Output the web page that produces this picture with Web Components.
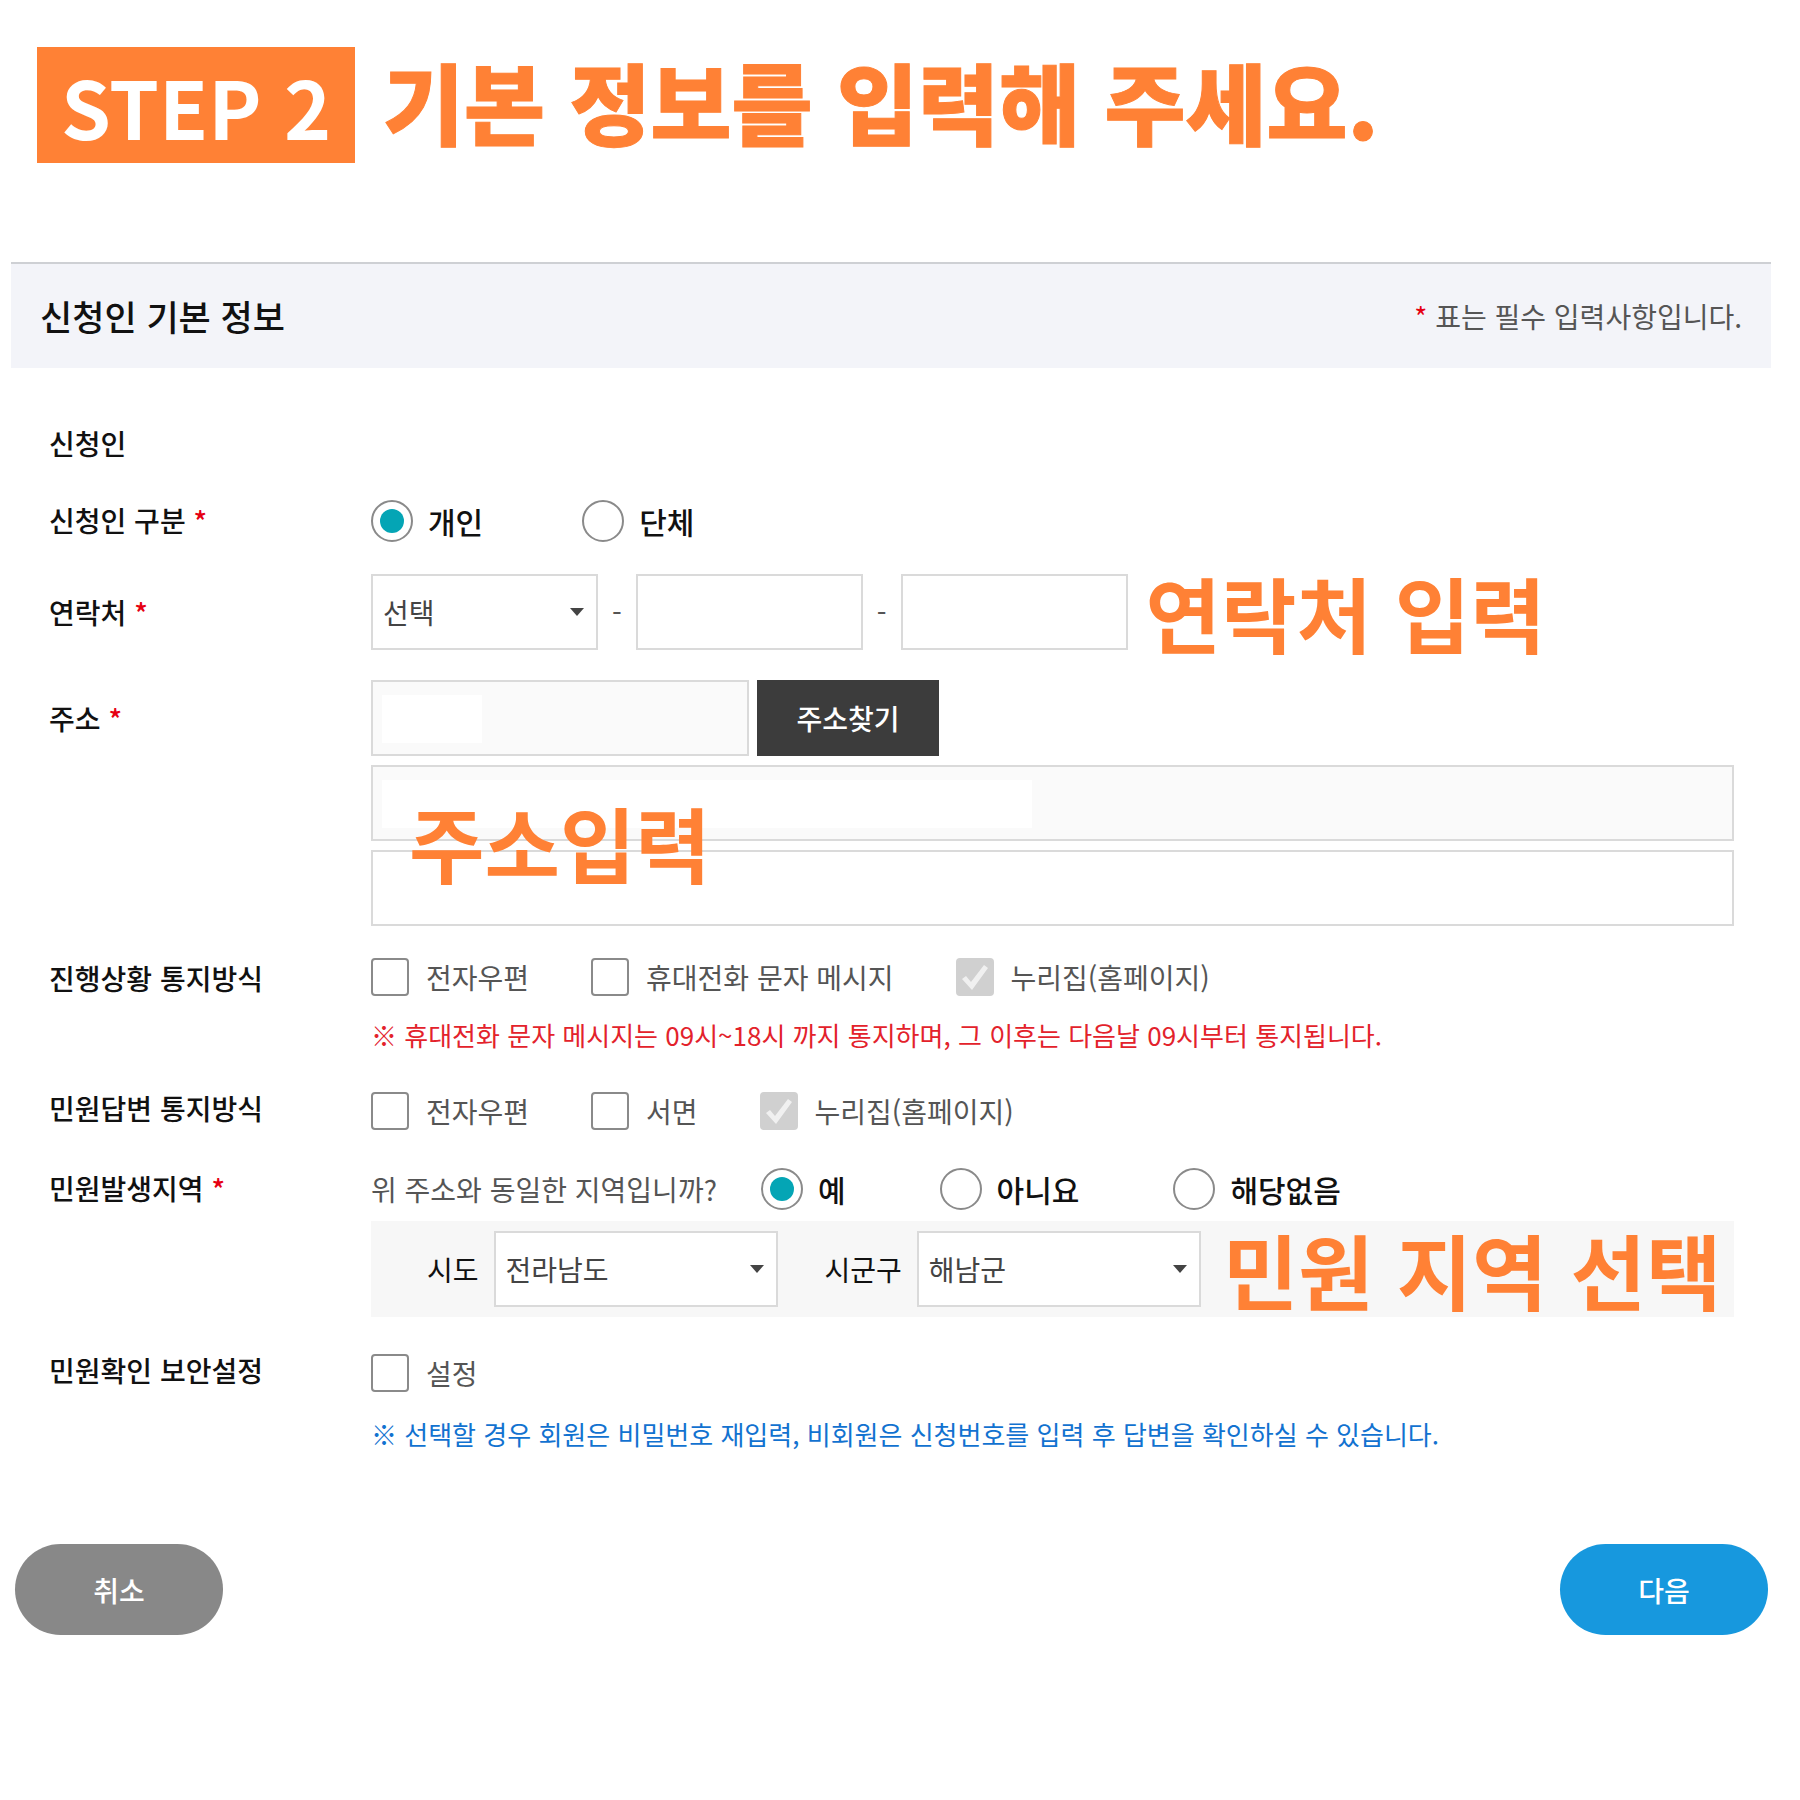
<!DOCTYPE html>
<html lang="ko">
<head>
<meta charset="utf-8">
<title>신청인 기본 정보</title>
<style>
  body {
    margin: 0;
    background: #fff;
    color: #111;
    font-family: "Noto Sans CJK KR", sans-serif;
    font-size: 28px;
    line-height: 40px;
    --accent: #ff8135;
    --line: #dadada;
  }
</style>
</head>
<body>
<apply-page></apply-page>

<script>
class StepTitle extends HTMLElement {
  constructor() {
    super();
    this.attachShadow({ mode: 'open' }).innerHTML = `
      <style>
        :host { display: block; padding: 47px 37px 99px; }
        h1 { display: flex; align-items: flex-start; gap: 28px; margin: 0; font-weight: 900; color: var(--accent); line-height: 116px; }
        .step { background: var(--accent); color: #fff; font-size: 80px; font-weight: 700; width: 318px; text-align: center; white-space: nowrap; }
        .text { font-size: 88px; line-height: 106px; -webkit-text-stroke: 1px var(--accent); white-space: nowrap; }
      </style>
      <h1><span class="step">${this.getAttribute('step')}</span><span class="text"><slot></slot></span></h1>`;
  }
}

class PanelHeader extends HTMLElement {
  constructor() {
    super();
    this.attachShadow({ mode: 'open' }).innerHTML = `
      <style>
        :host { display: flex; justify-content: space-between; align-items: center; height: 104px; padding: 0 29px; border-top: 2px solid #ced0d4; background: #f3f4f9; }
        h2 { margin: 0; font-size: 35px; font-weight: 500; }
        p { margin: 0; color: #555; }
        i { font-style: normal; color: #e60012; }
      </style>
      <h2><slot></slot></h2>
      <p><i>*</i> 표는 필수 입력사항입니다.</p>`;
  }
}

class FormRow extends HTMLElement {
  constructor() {
    super();
    const star = this.hasAttribute('required') ? ' <i>*</i>' : '';
    this.attachShadow({ mode: 'open' }).innerHTML = `
      <style>
        :host { display: grid; grid-template-columns: 322px minmax(0, 1fr); align-items: start; }
        .name { font-weight: 500; line-height: var(--lead, 40px); }
        i { font-style: normal; color: #e60012; }
        .field { padding-top: var(--drop, 0); }
      </style>
      <div class="name" id="name">${this.getAttribute('label')}${star}</div>
      <div class="field" role="group" aria-labelledby="name"><slot></slot></div>`;
  }
}

class ChoiceGroup extends HTMLElement {
  constructor() {
    super();
    const type = this.getAttribute('type');
    const name = this.getAttribute('name');
    const picked = Number(this.getAttribute('picked') || -1);
    const locked = this.hasAttribute('locked');
    const items = this.getAttribute('options').split('|').map((text, i) => `
      <span class="item">
        <span class="box">
          <input type="${type}" id="o${i}" name="${name}"${i === picked ? ' checked' : ''}${i === picked && locked ? ' disabled' : ''}>
          ${type === 'checkbox' ? '<svg viewBox="0 0 38 38" aria-hidden="true"><path d="M6 21 L10 18 L15 24 L28 7 L32 10 L16 32 Z"/></svg>' : ''}
        </span>
        <label for="o${i}">${text}</label>
      </span>`).join('');
    this.attachShadow({ mode: 'open' }).innerHTML = `
      <style>
        :host { display: flex; gap: 62px; color: #555; }
        :host([type="radio"]) { gap: var(--gap, 99px); color: #111; font-size: 30px; font-weight: 500; }
        .item { display: flex; align-items: center; gap: 17px; white-space: nowrap; }
        :host([type="radio"]) .item { gap: 15px; }
        .box { display: grid; }
        .box > * { grid-area: 1 / 1; }
        input { appearance: none; box-sizing: border-box; margin: 0; width: 38px; height: 38px; border: 2px solid #8a8a8a; border-radius: 4px; background: #fff; }
        input[type="radio"] { width: 42px; height: 42px; padding: 7px; border-radius: 50%; }
        input[type="radio"]:checked { background: #04a5b5 content-box; }
        input:disabled { border-color: #d0d0d0; background: #d0d0d0; }
        svg { width: 38px; height: 38px; fill: none; pointer-events: none; }
        input:checked + svg { fill: #f0f0f0; }
        label { line-height: 38px; }
      </style>${items}`;
  }
}

class TextField extends HTMLElement {
  constructor() {
    super();
    this.attachShadow({ mode: 'open' }).innerHTML = `
      <style>
        :host { display: block; }
        input { display: block; box-sizing: border-box; width: 100%; height: 76px; padding: 0 10px; border: 2px solid var(--line); border-radius: 0; background: #fff; font: inherit; color: #444; outline: 0; }
        input:read-only { background: linear-gradient(#fff, #fff) 9px 13px / var(--blank) 48px no-repeat #fafafa; }
      </style>
      <input type="text" aria-label="${this.getAttribute('label')}"${this.hasAttribute('readonly') ? ' readonly' : ''}>`;
  }
}

class SelectField extends HTMLElement {
  constructor() {
    super();
    const label = this.getAttribute('label');
    const shown = this.hasAttribute('show-label');
    this.attachShadow({ mode: 'open' }).innerHTML = `
      <style>
        :host { display: flex; align-items: center; gap: 15px; }
        .box { display: grid; align-items: center; width: var(--width, 227px); }
        .box > * { grid-area: 1 / 1; }
        select { appearance: none; box-sizing: border-box; width: 100%; height: 76px; padding: 0 10px; border: 2px solid var(--line); border-radius: 0; background: #fff; font: inherit; color: #444; }
        svg { justify-self: end; margin-right: 14px; width: 14px; height: 8px; fill: #444; pointer-events: none; }
      </style>
      ${shown ? `<label for="s">${label}</label>` : ''}
      <span class="box">
        <select id="s"${shown ? '' : ` aria-label="${label}"`}><option>${this.getAttribute('value')}</option></select>
        <svg viewBox="0 0 14 8" aria-hidden="true"><path d="M0 0H14L7 8Z"/></svg>
      </span>`;
  }
}

class PillButton extends HTMLElement {
  constructor() {
    super();
    this.attachShadow({ mode: 'open' }).innerHTML = `
      <style>
        :host { display: block; }
        button { display: block; width: var(--width, 208px); height: var(--height, 91px); padding: 0; border: 0; border-radius: var(--radius, 46px); background: var(--fill, #888); color: #fff; font: inherit; font-weight: 500; }
      </style>
      <button type="button"><slot></slot></button>`;
  }
}

class MemoText extends HTMLElement {
  constructor() {
    super();
    this.attachShadow({ mode: 'open' }).innerHTML = `
      <style>
        :host { display: block; color: var(--accent); font-size: 82px; font-weight: 700; line-height: 76px; white-space: nowrap; }
      </style><slot></slot>`;
  }
}

class ApplyPage extends HTMLElement {
  constructor() {
    super();
    this.attachShadow({ mode: 'open' }).innerHTML = `
      <style>
        :host { display: block; }
        .panel { margin: 0 29px 0 11px; }
        form { display: flex; flex-direction: column; padding: 55px 37px 0 38px; }
        .who { margin-bottom: 37px; }
        .kind { --lead: 40px; margin-bottom: 32px; }
        .phone { --lead: 76px; margin-bottom: 30px; }
        .address { --lead: 76px; margin-bottom: 32px; }
        .progress { margin-bottom: 33px; }
        .answer { --drop: 4px; margin-bottom: 38px; }
        .area { margin-bottom: 33px; }
        .secure { --drop: 4px; }
        .line { display: flex; align-items: center; }
        .phone .line { gap: 14px; color: #555; }
        .phone text-field { width: 227px; }
        .phone memo-text { margin-left: 4px; }
        .stack { position: relative; display: grid; gap: 9px; }
        .stack .line { gap: 8px; }
        .stack .line text-field { width: 378px; --blank: 100px; }
        .stack > text-field { --blank: 650px; }
        .stack pill-button { --width: 182px; --height: 76px; --radius: 0; --fill: #3c3c3c; }
        .stack memo-text { position: absolute; left: 38px; top: 124px; }
        p { margin: 0; font-size: 26px; }
        .red { margin-top: 19px; color: #e3222b; }
        .blue { margin-top: 22px; color: #1272d0; }
        .ask { gap: 44px; color: #555; --gap: 94px; }
        .region { display: flex; align-items: center; gap: 47px; margin-top: 11px; padding: 10px 0 10px 56px; background: #f7f7f7; }
        .region select-field { --width: 284px; }
        .region memo-text { margin-left: -25px; }
        footer { display: flex; justify-content: space-between; padding: 90px 3px 0 4px; }
        .next { --fill: #1798de; }
      </style>
      <step-title step="STEP 2">기본 정보를 입력해 주세요.</step-title>
      <main class="panel">
        <panel-header>신청인 기본 정보</panel-header>
        <form>
          <form-row class="who" label="신청인"></form-row>
          <form-row class="kind" label="신청인 구분" required>
            <choice-group type="radio" name="kind" options="개인|단체" picked="0"></choice-group>
          </form-row>
          <form-row class="phone" label="연락처" required>
            <div class="line">
              <select-field label="연락처 앞자리" value="선택"></select-field><span>-</span>
              <text-field label="연락처 가운데 자리"></text-field><span>-</span>
              <text-field label="연락처 끝자리"></text-field>
              <memo-text>연락처 입력</memo-text>
            </div>
          </form-row>
          <form-row class="address" label="주소" required>
            <div class="stack">
              <div class="line">
                <text-field label="우편번호" readonly></text-field>
                <pill-button>주소찾기</pill-button>
              </div>
              <text-field label="기본 주소" readonly></text-field>
              <text-field label="상세 주소"></text-field>
              <memo-text>주소입력</memo-text>
            </div>
          </form-row>
          <form-row class="progress" label="진행상황 통지방식">
            <choice-group type="checkbox" name="progress" options="전자우편|휴대전화 문자 메시지|누리집(홈페이지)" picked="2" locked></choice-group>
            <p class="red">※ 휴대전화 문자 메시지는 09시~18시 까지 통지하며, 그 이후는 다음날 09시부터 통지됩니다.</p>
          </form-row>
          <form-row class="answer" label="민원답변 통지방식">
            <choice-group type="checkbox" name="answer" options="전자우편|서면|누리집(홈페이지)" picked="2" locked></choice-group>
          </form-row>
          <form-row class="area" label="민원발생지역" required>
            <div class="line ask">
              <span>위 주소와 동일한 지역입니까?</span>
              <choice-group type="radio" name="same" options="예|아니요|해당없음" picked="0"></choice-group>
            </div>
            <div class="region">
              <select-field label="시도" value="전라남도" show-label></select-field>
              <select-field label="시군구" value="해남군" show-label></select-field>
              <memo-text>민원 지역 선택</memo-text>
            </div>
          </form-row>
          <form-row class="secure" label="민원확인 보안설정">
            <choice-group type="checkbox" name="secure" options="설정"></choice-group>
            <p class="blue">※ 선택할 경우 회원은 비밀번호 재입력, 비회원은 신청번호를 입력 후 답변을 확인하실 수 있습니다.</p>
          </form-row>
        </form>
        <footer>
          <pill-button>취소</pill-button>
          <pill-button class="next">다음</pill-button>
        </footer>
      </main>`;
  }
}

customElements.define('step-title', StepTitle);
customElements.define('panel-header', PanelHeader);
customElements.define('form-row', FormRow);
customElements.define('choice-group', ChoiceGroup);
customElements.define('text-field', TextField);
customElements.define('select-field', SelectField);
customElements.define('pill-button', PillButton);
customElements.define('memo-text', MemoText);
customElements.define('apply-page', ApplyPage);
</script>
</body>
</html>
